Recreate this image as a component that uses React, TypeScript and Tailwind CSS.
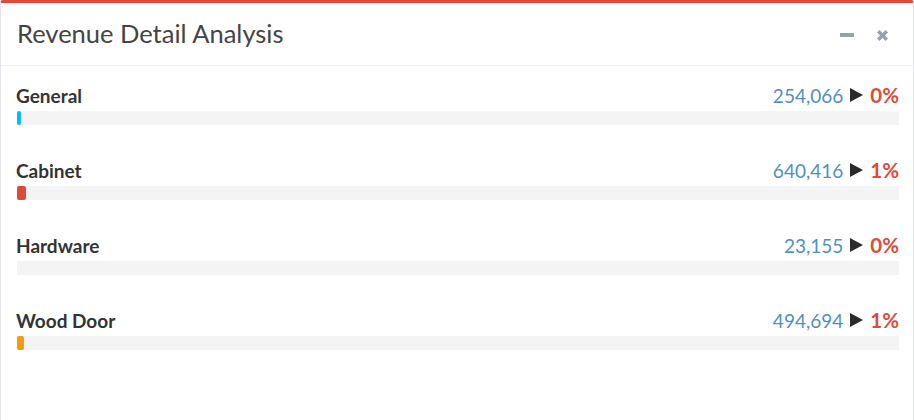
import React from "react";

const rows = [
  { label: "General", value: "254,066", pct: "0%", fill: 4, color: "bg-[#00c0ef]" },
  { label: "Cabinet", value: "640,416", pct: "1%", fill: 9, color: "bg-[#dd4b39]" },
  { label: "Hardware", value: "23,155", pct: "0%", fill: 0, color: "bg-[#f39c12]" },
  { label: "Wood Door", value: "494,694", pct: "1%", fill: 7, color: "bg-[#f39c12]" },
];

export default function App() {
  return (
    <div className="w-[914px] h-[420px] bg-white" style={{ fontFamily: "Lato, 'Open Sans', sans-serif" }}>
      <div className="h-full border-t-[3px] border-[#dd4b39] rounded-t-[3px] border-x border-x-[#e3e5ea] bg-white">
        <div className="h-[63px] flex items-center justify-between pl-[16px] pr-[24px] border-b border-[#f0f0f0]">
          <h3 className="text-[25.5px] text-[#444] leading-none">Revenue Detail Analysis</h3>
          <div className="flex items-center gap-[22px] text-[#97a0b3]">
            <div className="w-[14px] h-[4px] bg-[#97a0b3] mt-[2px]" />
            <svg width="13" height="13" viewBox="0 0 12 12" className="mt-[2px]">
              <path d="M2 2 L10 10 M10 2 L2 10" stroke="#97a0b3" strokeWidth="3.2" strokeLinecap="butt" />
            </svg>
          </div>
        </div>
        <div className="pl-[15px] pr-[14px] pt-[19px] flex flex-col gap-[35px]">
          {rows.map((r) => (
            <div key={r.label} className="flex flex-col">
              <div className="flex items-center justify-between h-[20px]">
                <span className="text-[19px] font-bold text-[#333] leading-none">{r.label}</span>
                <span className="flex items-center text-[19px] leading-none">
                  <span className="text-[#4f91bd]">{r.value}</span>
                  <svg width="14" height="14" viewBox="0 0 14 14" className="ml-[6px] mr-[7px]">
                    <path d="M1 0 L14 7 L1 14 Z" fill="#2b2b2b" />
                  </svg>
                  <span className="text-[#dd4b39] font-bold text-[20.5px]">{r.pct}</span>
                </span>
              </div>
              <div className="mt-[6px] h-[14px] bg-[#f4f4f4] ml-[1px]">
                {r.fill > 0 && (
                  <div className={`h-full rounded-[2px] ${r.color}`} style={{ width: r.fill }} />
                )}
              </div>
            </div>
          ))}
        </div>
      </div>
    </div>
  );
}
